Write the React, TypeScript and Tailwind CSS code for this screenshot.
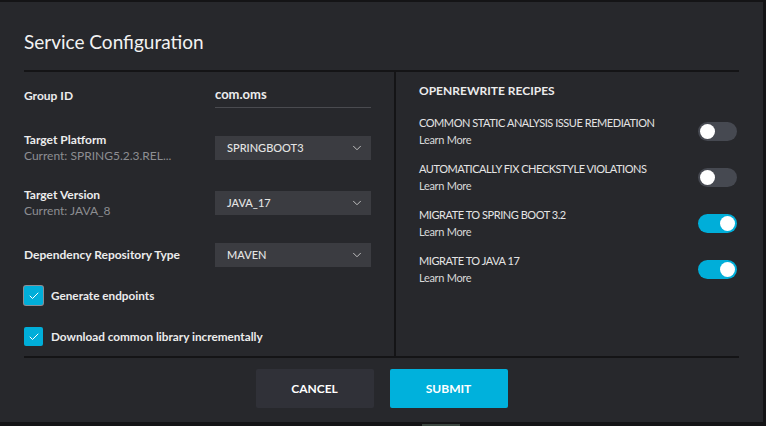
import { ChevronDown, Check } from "lucide-react";

type Campo = {
  etiqueta: string;
  actual?: string;
  valor: string;
};

const campos: Campo[] = [
  { etiqueta: "Target Platform", actual: "Current: SPRING5.2.3.REL...", valor: "SPRINGBOOT3" },
  { etiqueta: "Target Version", actual: "Current: JAVA_8", valor: "JAVA_17" },
  { etiqueta: "Dependency Repository Type", valor: "MAVEN" },
];

const recetas = [
  { nombre: "COMMON STATIC ANALYSIS ISSUE REMEDIATION", activa: false },
  { nombre: "AUTOMATICALLY FIX CHECKSTYLE VIOLATIONS", activa: false },
  { nombre: "MIGRATE TO SPRING BOOT 3.2", activa: true },
  { nombre: "MIGRATE TO JAVA 17", activa: true },
];

function Interruptor({ activo }: { activo: boolean }) {
  return (
    <div
      className={`flex h-[19px] w-[39px] shrink-0 items-center rounded-full px-[2px] ${
        activo ? "justify-end bg-[#00aed9]" : "justify-start bg-[#464951]"
      }`}
    >
      <div className="h-[15px] w-[15px] rounded-full bg-white" />
    </div>
  );
}

function Casilla({ texto, enfocada }: { texto: string; enfocada?: boolean }) {
  return (
    <label className="flex items-center gap-[8px]">
      <span
        className={`flex h-[19px] w-[19px] items-center justify-center rounded-[2px] bg-[#00aed9] ${
          enfocada ? "ring-1 ring-[#8a8d94]" : ""
        }`}
      >
        <Check size={12} strokeWidth={2} className="text-white" />
      </span>
      <span className="text-[11.75px] font-bold leading-4 text-[#ececec]">{texto}</span>
    </label>
  );
}

export default function App() {
  return (
    <div
      className="h-[426px] w-[766px] overflow-hidden bg-[#141416] pt-[2px]"
      style={{ fontFamily: "Lato, 'Open Sans', sans-serif" }}
    >
      <div className="flex h-[420px] w-[763px] flex-col bg-[#27282c] px-6 text-[#ececec]">
        <div className="border-b-2 border-[#141416] pt-[26px] pb-[14px]">
          <h1 className="text-[19px] leading-[28px] text-[#f2f2f2]">Service Configuration</h1>
        </div>

        <div className="flex h-[286px] border-b-2 border-[#141416]">
          <div className="w-[372px] shrink-0 border-r-2 border-[#141416] pr-[23px]">
            <div className="mt-[12px] flex h-[24px] items-center">
              <span className="w-[191px] shrink-0 text-[12px] font-bold">Group ID</span>
              <div className="flex h-[24px] w-[156px] items-start border-b border-[#4a4b50] pt-[2px] text-[13px] font-bold leading-4">
                com.oms
              </div>
            </div>

            {campos.map((c, i) => (
              <div
                key={c.etiqueta}
                className={`flex items-center ${
                  i === 0 ? "mt-[24px]" : i === 1 ? "mt-[23px]" : "mt-[24px]"
                }`}
              >
                <div className="w-[191px] shrink-0">
                  <div className="text-[12px] font-bold leading-4">{c.etiqueta}</div>
                  {c.actual && (
                    <div className="text-[12px] leading-4 text-[#8d8e92]">{c.actual}</div>
                  )}
                </div>
                <div className="flex h-[24px] w-[156px] items-center justify-between bg-[#3b3c41] pr-[7px] pl-[12px]">
                  <span className="text-[11px] font-medium text-[#e4e4e4]">{c.valor}</span>
                  <ChevronDown size={14} strokeWidth={1.5} className="text-[#d0d0d0]" />
                </div>
              </div>
            ))}

            <div className="mt-[19px] flex flex-col gap-[22px]">
              <Casilla texto="Generate endpoints" enfocada />
              <Casilla texto="Download common library incrementally" />
            </div>
          </div>

          <div className="flex-1 pt-[11px] pr-[2px] pl-[23px]">
            <div className="text-[12px] font-bold leading-4">OPENREWRITE RECIPES</div>
            <ul className="mt-[16px] flex flex-col gap-[13px]">
              {recetas.map((r) => (
                <li key={r.nombre} className="flex items-center justify-between">
                  <div>
                    <div className="text-[11px] leading-4 tracking-[-0.45px] text-[#e4e4e4]">
                      {r.nombre}
                    </div>
                    <div className="mt-[1px] text-[11px] leading-4 tracking-[-0.3px] text-[#d8d8d8]">
                      Learn More
                    </div>
                  </div>
                  <Interruptor activo={r.activa} />
                </li>
              ))}
            </ul>
          </div>
        </div>

        <div className="flex justify-center gap-[16px] pt-[11px]">
          <button
            type="button"
            className="h-[39px] w-[118px] rounded-[2px] bg-[#303138] text-[12px] font-bold text-white"
          >
            CANCEL
          </button>
          <button
            type="button"
            className="h-[39px] w-[118px] rounded-[2px] bg-[#00b1dc] text-[12px] font-bold text-white"
          >
            SUBMIT
          </button>
        </div>
      </div>
      <div className="ml-[422px] mt-[2px] h-[2px] w-[38px] bg-[#3b4640]" />
    </div>
  );
}
